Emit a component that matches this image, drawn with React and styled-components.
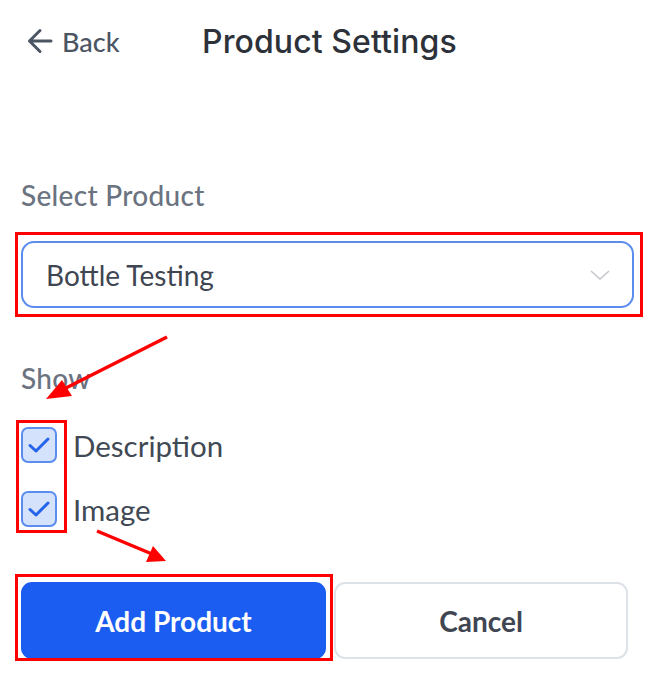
import React from "react";
import styled, { createGlobalStyle } from "styled-components";

const Global = createGlobalStyle`
  html, body { margin: 0; padding: 0; background: #ffffff; }
  body { font-family: "Lato", "Noto Sans", sans-serif; }
  * { box-sizing: border-box; }
`;

const Page = styled.div`
  position: relative;
  width: 649px;
  height: 679px;
  overflow: hidden;
  padding: 0 15px 0 21px;
  background: #fff;
`;

const Header = styled.header`
  height: 82px;
  display: flex;
  align-items: center;
`;

const BackLink = styled.a`
  display: flex;
  align-items: center;
  gap: 9px;
  margin-left: 6px;
  width: 175px;
  color: #4b5563;
  font-family: "Lato", sans-serif;
  font-size: 27px;
  font-weight: 500;
  text-decoration: none;
`;

const Title = styled.h1`
  margin: 0;
  font-family: "Inter", sans-serif;
  font-size: 32px;
  font-weight: 500;
  color: #2d3139;
  letter-spacing: 0.1px;
`;

const Form = styled.div`
  display: flex;
  flex-direction: column;
  padding-top: 96px;
`;

const FieldLabel = styled.div`
  font-family: "Lato", sans-serif;
  font-size: 28px;
  line-height: 34px;
  font-weight: 500;
  letter-spacing: 0.3px;
  color: #6b7280;
  margin-bottom: ${(p) => p.$mb || 0}px;
  margin-top: ${(p) => p.$mt || 0}px;
`;

const Annotated = styled.div`
  position: relative;
  margin-top: ${(p) => p.$mt || 0}px;
  align-self: ${(p) => (p.$shrink ? "flex-start" : "stretch")};
`;

const RedBox = styled.div`
  position: absolute;
  top: ${(p) => p.$t}px;
  left: ${(p) => p.$l}px;
  bottom: ${(p) => p.$b}px;
  ${(p) => (p.$w ? `width: ${p.$w}px;` : `right: ${p.$r}px;`)}
  border: 3px solid #ff0000;
  pointer-events: none;
`;

const SelectBox = styled.div`
  height: 67px;
  border: 2px solid #5b8def;
  border-radius: 13px;
  display: flex;
  align-items: center;
  justify-content: space-between;
  padding: 0 22px 0 23px;
  font-family: "Lato", sans-serif;
  font-size: 28px;
  color: #3f4652;
`;

const Options = styled.div`
  display: flex;
  flex-direction: column;
  gap: 28px;
`;

const CheckRow = styled.label`
  display: flex;
  align-items: center;
  gap: 16px;
  height: 36px;
  font-family: "Lato", sans-serif;
  font-size: 29.5px;
  color: #414955;
`;

const Box = styled.span`
  width: 36px;
  height: 36px;
  border: 2px solid #5b8def;
  border-radius: 7px;
  background: #d4e2fc;
  display: flex;
  align-items: center;
  justify-content: center;
  flex: none;
`;

const Buttons = styled.div`
  display: grid;
  grid-template-columns: 305px 294px;
  gap: 8px;
`;

const Button = styled.button`
  height: 77px;
  border-radius: 11px;
  font-family: "Lato", sans-serif;
  font-size: 28px;
  font-weight: 700;
  cursor: pointer;
  border: 2px solid ${(p) => (p.$primary ? "#1a5df0" : "#dde1e8")};
  background: ${(p) => (p.$primary ? "#1a5df0" : "#ffffff")};
  color: ${(p) => (p.$primary ? "#ffffff" : "#3f4652")};
`;

const ArrowLayer = styled.svg`
  position: absolute;
  left: 0;
  top: 0;
  pointer-events: none;
`;

function Check() {
  return (
    <svg width="24" height="18" viewBox="0 0 24 18">
      <path d="M3 9.5 L9 15 L21 3" fill="none" stroke="#2563eb" strokeWidth="3" strokeLinecap="round" strokeLinejoin="round" />
    </svg>
  );
}

function Option({ label }) {
  return (
    <CheckRow>
      <Box>
        <Check />
      </Box>
      {label}
    </CheckRow>
  );
}

export default function App() {
  return (
    <>
      <Global />
      <Page>
        <Header>
          <BackLink href="#">
            <svg width="26" height="26" viewBox="0 0 26 26">
              <path d="M24 13 H3 M13 2.5 L2.5 13 L13 23.5" fill="none" stroke="#4b5563" strokeWidth="3" strokeLinecap="round" strokeLinejoin="round" />
            </svg>
            Back
          </BackLink>
          <Title>Product Settings</Title>
        </Header>
        <Form>
          <FieldLabel $mb={29}>Select Product</FieldLabel>
          <Annotated>
            <SelectBox>
              Bottle Testing
              <svg width="20" height="10" viewBox="0 0 20 10">
                <path d="M1 1 L10 9 L19 1" fill="none" stroke="#c4c7cc" strokeWidth="1.6" />
              </svg>
            </SelectBox>
            <RedBox $t={-9} $l={-6} $r={-9} $b={-9} />
          </Annotated>
          <FieldLabel $mt={53}>Show</FieldLabel>
          <Annotated $mt={32} $shrink>
            <Options>
              <Option label="Description" />
              <Option label="Image" />
            </Options>
            <RedBox $t={-7} $l={-5} $b={-6} $w={51} />
          </Annotated>
          <Annotated $mt={55}>
            <Buttons>
              <Button $primary>Add Product</Button>
              <Button>Cancel</Button>
            </Buttons>
            <RedBox $t={-8} $l={-6} $w={318} $b={-2} />
          </Annotated>
        </Form>
        <ArrowLayer width="649" height="679" viewBox="0 0 649 679">
          <line x1="167" y1="337" x2="60" y2="391" stroke="#ff0000" strokeWidth="3.5" />
          <polygon points="46,399 62,380 72,396" fill="#ff0000" />
          <line x1="97" y1="531" x2="152" y2="554" stroke="#ff0000" strokeWidth="3.5" />
          <polygon points="166,561 146,562 153,546" fill="#ff0000" />
        </ArrowLayer>
      </Page>
    </>
  );
}
